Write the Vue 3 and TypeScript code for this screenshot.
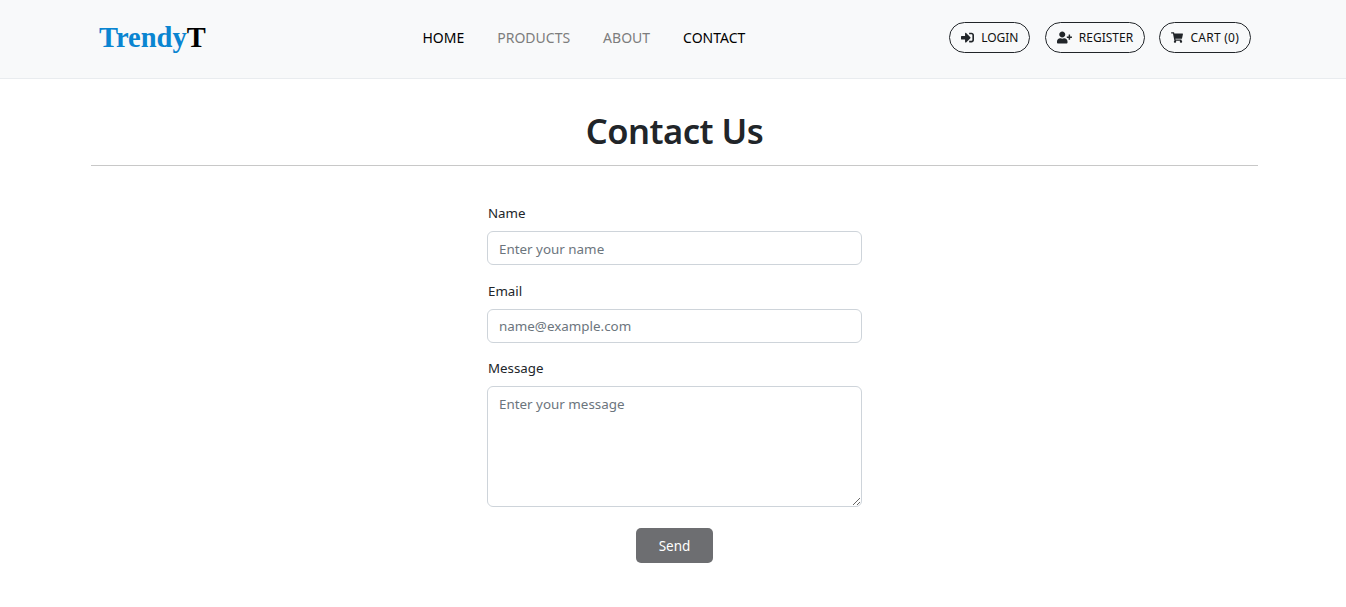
<template>
  <div class="page">
    <header class="navbar">
      <a class="logo" href="#">Trendy<span>T</span></a>
      <nav class="links">
        <a v-for="link in links" :key="link.label" href="#" :class="{ muted: link.muted }">{{ link.label }}</a>
      </nav>
      <div class="actions">
        <a class="pill" href="#">
          <svg class="icon" viewBox="0 0 512 512"><path d="M416 448h-84c-6.6 0-12-5.4-12-12v-40c0-6.6 5.4-12 12-12h84c17.7 0 32-14.3 32-32V160c0-17.7-14.3-32-32-32h-84c-6.6 0-12-5.4-12-12V76c0-6.6 5.4-12 12-12h84c53 0 96 43 96 96v192c0 53-43 96-96 96zm-47-201L201 79c-15-15-41-4.5-41 17v96H24c-13.3 0-24 10.7-24 24v96c0 13.3 10.7 24 24 24h136v96c0 21.5 26 32 41 17l168-168c9.3-9.4 9.3-24.6 0-34z" /></svg>
          LOGIN
        </a>
        <a class="pill" href="#">
          <svg class="icon wide" viewBox="0 0 640 512"><path d="M624 208h-64v-64c0-8.8-7.2-16-16-16h-32c-8.8 0-16 7.2-16 16v64h-64c-8.8 0-16 7.2-16 16v32c0 8.8 7.2 16 16 16h64v64c0 8.8 7.2 16 16 16h32c8.8 0 16-7.2 16-16v-64h64c8.8 0 16-7.2 16-16v-32c0-8.8-7.2-16-16-16zm-400 48c70.7 0 128-57.3 128-128S294.7 0 224 0 96 57.3 96 128s57.3 128 128 128zm89.6 32h-16.7c-22.2 10.2-46.9 16-72.9 16s-50.6-5.8-72.9-16h-16.7C60.2 288 0 348.2 0 422.4V464c0 26.5 21.5 48 48 48h352c26.5 0 48-21.5 48-48v-41.6c0-74.2-60.2-134.4-134.4-134.4z" /></svg>
          REGISTER
        </a>
        <a class="pill cart" href="#">
          <svg class="icon narrow" viewBox="0 0 576 512"><path d="M528.12 301.319l47.273-208C578.806 78.301 567.391 64 551.99 64H159.208l-9.166-44.81C147.758 8.021 137.93 0 126.529 0H24C10.745 0 0 10.745 0 24v16c0 13.255 10.745 24 24 24h69.883l70.248 343.435C147.325 417.1 136 435.222 136 456c0 30.928 25.072 56 56 56s56-25.072 56-56c0-15.674-6.447-29.835-16.824-40h209.647C430.447 426.165 424 440.326 424 456c0 30.928 25.072 56 56 56s56-25.072 56-56c0-22.172-12.888-41.332-31.579-50.405l5.517-24.276c3.413-15.018-8.002-29.319-23.403-29.319H218.117l-6.545-32h293.145c11.206 0 20.92-7.754 23.403-18.681z" /></svg>
          CART (0)
        </a>
      </div>
    </header>

    <main class="content">
      <h1>Contact Us</h1>
      <hr />
      <form class="form" @submit.prevent>
        <label for="name">Name</label>
        <input id="name" type="text" placeholder="Enter your name" />
        <label for="email">Email</label>
        <input id="email" type="email" placeholder="name@example.com" />
        <label for="message">Message</label>
        <textarea id="message" placeholder="Enter your message"></textarea>
        <button type="submit">Send</button>
      </form>
    </main>
  </div>
</template>

<script setup lang="ts">
const links = [
  { label: 'HOME', muted: false },
  { label: 'PRODUCTS', muted: true },
  { label: 'ABOUT', muted: true },
  { label: 'CONTACT', muted: false }
];
</script>

<style>
body {
  margin: 0;
  background: #fff;
}
</style>

<style scoped>
.page {
  font-family: 'Noto Sans', 'Open Sans', sans-serif;
  font-size: 14px;
  color: #212529;
}

a {
  text-decoration: none;
  color: inherit;
}

.navbar {
  box-sizing: content-box;
  display: flex;
  align-items: center;
  justify-content: space-between;
  height: 75px;
  padding: 0 95px 3px 99px;
  background: #f8f9fa;
  border-bottom: 1px solid #e9ecef;
}

.logo {
  font-family: 'Liberation Serif', serif;
  font-size: 28.5px;
  font-weight: 700;
  color: #0a85d1;
}

.logo span {
  color: #000;
}

.links {
  display: flex;
  gap: 33px;
  margin-left: 13px;
  color: #000;
}

.links .muted {
  color: #7d7d7d;
}

.actions {
  display: flex;
  gap: 14.3px;
}

.pill {
  display: flex;
  align-items: center;
  gap: 7px;
  height: 29px;
  padding: 0 11px;
  border: 1px solid #212529;
  border-radius: 16px;
  font-size: 12px;
  color: #111;
}

.pill.cart {
  letter-spacing: 0.25px;
}

.icon {
  width: 13px;
  height: 13px;
  fill: #212529;
}

.icon.wide {
  width: 15px;
}

.icon.narrow {
  width: 12px;
}

.content {
  padding: 0 88px 0 91px;
}

h1 {
  margin: 0;
  padding-top: 29px;
  font-size: 34.5px;
  line-height: 46px;
  font-weight: 600;
  letter-spacing: -0.5px;
  text-align: center;
}

hr {
  margin: 11px 0 0;
  border: 0;
  border-top: 1px solid #c8c8c8;
}

.form {
  display: flex;
  flex-direction: column;
  width: 375px;
  margin: 37px auto 0;
}

label {
  line-height: 20px;
  margin-bottom: 8px;
  padding-left: 1px;
  font-size: 13.3px;
}

input,
textarea {
  box-sizing: border-box;
  width: 100%;
  padding: 6px 12px 6px 11px;
  border: 1px solid #ced4da;
  border-radius: 6px;
  background: #fff;
  font-family: inherit;
  font-size: 13.4px;
  color: #212529;
  outline: none;
}

input {
  height: 34px;
  margin-bottom: 16px;
}

#name {
  padding-top: 7px;
  padding-bottom: 5px;
}

#email {
  margin-bottom: 15px;
}

textarea {
  height: 121px;
  padding-top: 8px;
  margin-bottom: 21px;
}

input::placeholder,
textarea::placeholder {
  color: #6c757d;
}

button {
  align-self: center;
  width: 77px;
  height: 35px;
  border: 0;
  border-radius: 5px;
  background: #6d6e71;
  color: #fff;
  font-family: inherit;
  font-size: 13.5px;
}
</style>
